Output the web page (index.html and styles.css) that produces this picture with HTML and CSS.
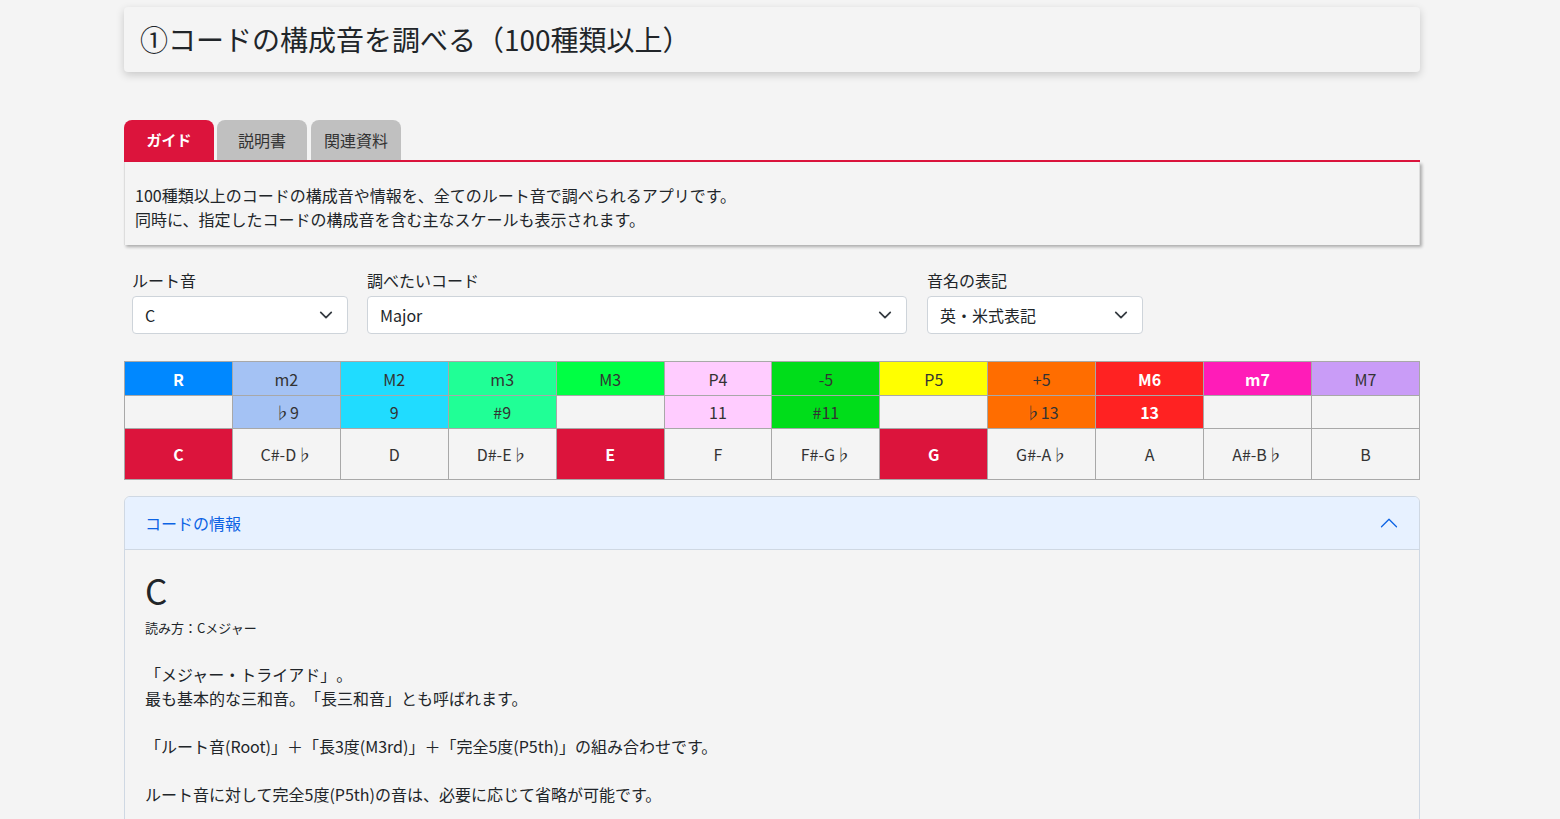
FILE: index.html
```html
<!DOCTYPE html>
<html lang="ja">
<head>
<meta charset="utf-8">
<title>コードの構成音を調べる</title>
<link rel="stylesheet" href="styles.css">
</head>
<body>
<div class="page">
  <header class="title-card">
    <h1 class="title">①コードの構成音を調べる（100種類以上）</h1>
  </header>

  <nav class="tabs">
    <div class="tab tab-active">ガイド</div>
    <div class="tab">説明書</div>
    <div class="tab">関連資料</div>
  </nav>
  <div class="tab-panel">
    100種類以上のコードの構成音や情報を、全てのルート音で調べられるアプリです。<br>
    同時に、指定したコードの構成音を含む主なスケールも表示されます。
  </div>

  <div class="form-row">
    <div class="field field-root">
      <label class="field-label">ルート音</label>
      <div class="select"><span>C</span><svg class="caret" viewBox="0 0 16 16" width="16" height="16"><path d="M2 5l6 6 6-6" fill="none" stroke="#343a40" stroke-width="2" stroke-linecap="round" stroke-linejoin="round"/></svg></div>
    </div>
    <div class="field field-chord">
      <label class="field-label">調べたいコード</label>
      <div class="select"><span>Major</span><svg class="caret" viewBox="0 0 16 16" width="16" height="16"><path d="M2 5l6 6 6-6" fill="none" stroke="#343a40" stroke-width="2" stroke-linecap="round" stroke-linejoin="round"/></svg></div>
    </div>
    <div class="field field-notation">
      <label class="field-label">音名の表記</label>
      <div class="select"><span>英・米式表記</span><svg class="caret" viewBox="0 0 16 16" width="16" height="16"><path d="M2 5l6 6 6-6" fill="none" stroke="#343a40" stroke-width="2" stroke-linecap="round" stroke-linejoin="round"/></svg></div>
    </div>
  </div>

  <table class="notes">
    <tr class="row-interval">
      <td class="c-r light">R</td>
      <td class="c-m2">m2</td>
      <td class="c-M2">M2</td>
      <td class="c-m3">m3</td>
      <td class="c-M3">M3</td>
      <td class="c-P4">P4</td>
      <td class="c-d5">-5</td>
      <td class="c-P5">P5</td>
      <td class="c-a5">+5</td>
      <td class="c-M6 light">M6</td>
      <td class="c-m7 light">m7</td>
      <td class="c-M7">M7</td>
    </tr>
    <tr class="row-tension">
      <td></td>
      <td class="c-m2">♭9</td>
      <td class="c-M2">9</td>
      <td class="c-m3">#9</td>
      <td></td>
      <td class="c-P4">11</td>
      <td class="c-d5">#11</td>
      <td></td>
      <td class="c-a5">♭13</td>
      <td class="c-M6 light">13</td>
      <td></td>
      <td></td>
    </tr>
    <tr class="row-note">
      <td class="on">C</td>
      <td>C#-D♭</td>
      <td>D</td>
      <td>D#-E♭</td>
      <td class="on">E</td>
      <td>F</td>
      <td>F#-G♭</td>
      <td class="on">G</td>
      <td>G#-A♭</td>
      <td>A</td>
      <td>A#-B♭</td>
      <td>B</td>
    </tr>
  </table>

  <section class="accordion">
    <div class="acc-header">
      <span>コードの情報</span>
      <svg class="acc-icon" viewBox="0 0 16 16" width="20" height="20"><path fill="#0c63e4" fill-rule="evenodd" d="M1.646 11.354a.5.5 0 0 0 .708 0L8 5.707l5.646 5.647a.5.5 0 0 0 .708-.708l-6-6a.5.5 0 0 0-.708 0l-6 6a.5.5 0 0 0 0 .708z"/></svg>
    </div>
    <div class="acc-body">
      <h2 class="chord-name">C</h2>
      <div class="reading">読み方：Cメジャー</div>
      <p class="desc">
        「メジャー・トライアド」。<br>
        最も基本的な三和音。「長三和音」とも呼ばれます。<br>
        <br>
        「ルート音(Root)」＋「長3度(M3rd)」＋「完全5度(P5th)」の組み合わせです。<br>
        <br>
        ルート音に対して完全5度(P5th)の音は、必要に応じて省略が可能です。
      </p>
    </div>
  </section>
</div>
</body>
</html>
```

FILE: styles.css
```css
* { box-sizing: border-box; }

body {
  margin: 0;
  background: #f4f4f4;
  color: #212529;
  font-family: "Noto Sans CJK JP", "Noto Sans", sans-serif;
  font-size: 16px;
  line-height: 1.5;
  text-spacing-trim: space-all;
}

.page {
  width: 1296px;
  margin-left: 124px;
  padding-top: 7px;
}

.title-card {
  height: 65px;
  padding: 0 16px;
  display: flex;
  align-items: center;
  background: #f4f4f4;
  border-radius: 4px;
  box-shadow: 0 3px 9px rgba(0, 0, 0, 0.18);
}

.title {
  margin: 0;
  font-size: 28px;
  font-weight: 400;
  line-height: 1.2;
  color: #212529;
}

.tabs {
  margin-top: 48px;
  display: flex;
  gap: 3px;
  border-bottom: 2px solid #dc143c;
}

.tab {
  width: 90px;
  height: 40px;
  display: flex;
  align-items: center;
  justify-content: center;
  background: #c0c0c0;
  color: #333;
  font-size: 16px;
  border-radius: 8px 8px 0 0;
}

.tab:nth-child(3) { margin-left: 1px; }

.tab-active {
  background: #dc143c;
  color: #fff;
  font-weight: 700;
  font-size: 15px;
}

.tab-panel {
  padding: 21px 10px 14px;
  font-size: 16px;
  line-height: 24px;
  border-left: 1px solid #ddd;
  border-right: 1px solid #ddd;
  box-shadow: 2px 2px 3px rgba(0, 0, 0, 0.3);
}

.form-row {
  margin-top: 23px;
  padding-left: 8px;
  display: flex;
  gap: 19px;
}

.field { display: flex; flex-direction: column; }
.field-root { width: 216px; }
.field-chord { width: 540px; }
.field-notation { width: 216px; margin-left: 1px; }

.field-label {
  font-size: 16px;
  line-height: 24px;
  margin-bottom: 4px;
}

.select {
  height: 38px;
  padding: 0 12px;
  display: flex;
  align-items: center;
  justify-content: space-between;
  background: #fff;
  border: 1px solid #ced4da;
  border-radius: 4px;
  font-size: 16px;
}

.caret { width: 14px; height: 14px; margin-right: 2px; }

.notes {
  margin-top: 27px;
  width: 1296px;
  border-collapse: collapse;
  table-layout: fixed;
  font-size: 16px;
  color: #333;
}

.notes td {
  border: 1px solid #a8a8a8;
  text-align: center;
  padding: 0;
  line-height: 20px;
}

.row-interval td { height: 34px; }
.row-tension td { height: 33px; }
.row-note td { height: 51px; }

.notes .light { color: #fff; font-weight: 700; }
.notes .on { background: #dc143c; color: #fff; font-weight: 700; }

.c-r { background: #0088ff; }
.c-m2 { background: #a4c2f4; }
.c-M2 { background: #20dcff; }
.c-m3 { background: #20ff96; }
.c-M3 { background: #00ff44; }
.c-P4 { background: #ffccff; }
.c-d5 { background: #00dd1a; }
.c-P5 { background: #ffff00; }
.c-a5 { background: #ff6d00; }
.c-M6 { background: #ff2222; }
.c-m7 { background: #ff1cb8; }
.c-M7 { background: #c99cf7; }

.accordion {
  margin-top: 16px;
  border: 1px solid #cfd8e3;
  border-radius: 6px 6px 0 0;
  overflow: hidden;
}

.acc-header {
  height: 53px;
  padding: 0 20px 0 20px;
  display: flex;
  align-items: center;
  justify-content: space-between;
  background: #e7f1ff;
  color: #0c63e4;
  font-size: 16px;
  border-bottom: 1px solid #cfd8e3;
}

.acc-body {
  padding: 19px 20px 40px;
  background: #f4f4f4;
}

.chord-name {
  margin: 0 0 7px;
  font-size: 35px;
  font-weight: 400;
  line-height: 1.2;
}

.reading {
  font-size: 13px;
  line-height: 20px;
}

.desc {
  margin: 24px 0 0;
  font-size: 16px;
  line-height: 24px;
}
```
